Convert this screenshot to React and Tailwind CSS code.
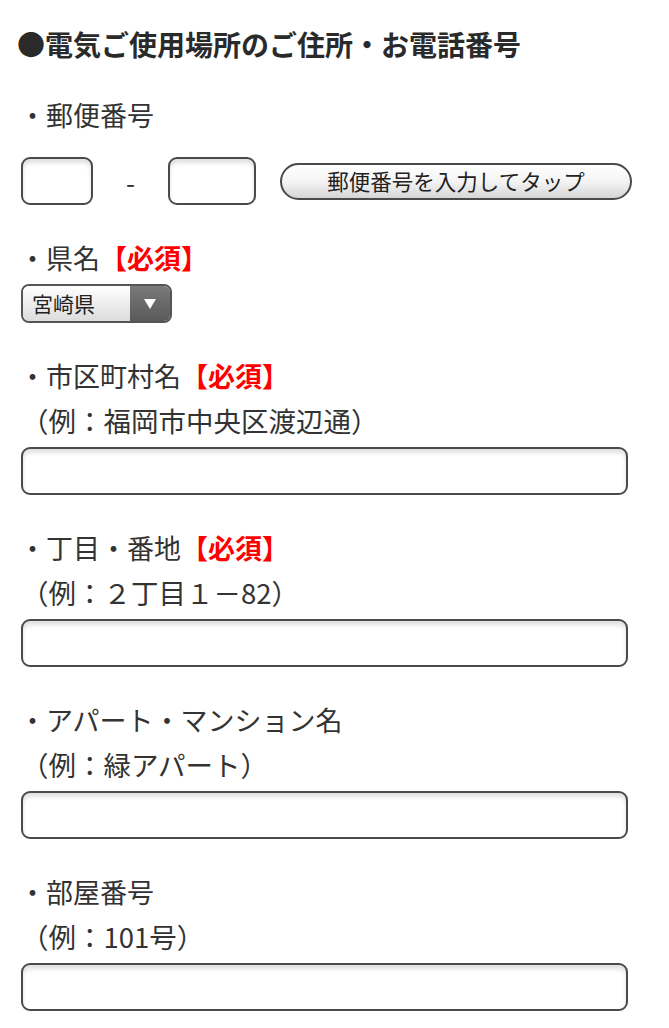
const font = { fontFamily: '"Noto Sans CJK JP", "Noto Sans", sans-serif' };

function Label({ text, required }) {
  return (
    <div className="-ml-[2px] h-[44px] leading-[44px] text-[27px] text-[#333] whitespace-nowrap">
      ・{text}
      {required && <span className="font-bold text-[#ff0000]">【必須】</span>}
    </div>
  );
}

function Example({ text }) {
  return <div className="h-[44px] leading-[44px] text-[27.5px] text-[#333] whitespace-nowrap">{text}</div>;
}

function TextBox({ className = '' }) {
  return (
    <input
      type="text"
      className={`block h-[48px] rounded-[9px] border-2 border-[#4a4a4a] bg-white shadow-[inset_0_4px_4px_rgba(0,0,0,0.12)] outline-none ${className}`}
    />
  );
}

function Field({ label, example, required, last }) {
  return (
    <div className={last ? '' : 'pb-[31px]'}>
      <Label text={label} required={required} />
      <Example text={example} />
      <TextBox className="mt-[5px] w-[607px]" />
    </div>
  );
}

export default function App() {
  return (
    <div className="w-[669px] min-h-[1028px] bg-white pl-[21px] pt-[22px]" style={font}>
      <h2 className="h-[44px] leading-[44px] text-[28px] font-bold text-[#2a2a2a] whitespace-nowrap -ml-[4px]">
        ●電気ご使用場所のご住所・お電話番号
      </h2>

      <div className="pt-[27px] pb-[31px]">
        <Label text="郵便番号" />
        <div className="mt-[20px] flex items-center">
          <TextBox className="w-[72px]" />
          <span className="w-[75px] text-center text-[26px] text-[#333]">-</span>
          <TextBox className="w-[88px]" />
          <button className="ml-[24px] h-[37px] w-[352px] rounded-full border-2 border-[#4a4a4a] bg-gradient-to-b from-white via-[#f4f4f4] to-[#d6d6d6] text-[21.5px] leading-none text-[#222]">
            郵便番号を入力してタップ
          </button>
        </div>
      </div>

      <div className="pb-[31px]">
        <Label text="県名" required />
        <div className="mt-[4px] flex h-[39px] w-[151px] overflow-hidden rounded-[8px] border-2 border-[#555]">
          <div className="flex flex-1 items-center bg-gradient-to-b from-white to-[#dcdcdc] pl-[9px] text-[21px] text-[#222]">
            宮崎県
          </div>
          <div className="flex w-[40px] items-center justify-center bg-gradient-to-b from-[#7a7a7a] to-[#5a5a5a]">
            <svg width="14" height="12" viewBox="0 0 14 12">
              <path d="M1 1 H13 L7 11 Z" fill="#fff" />
            </svg>
          </div>
        </div>
      </div>

      <Field label="市区町村名" required example="（例：福岡市中央区渡辺通）" />
      <Field label="丁目・番地" required example="（例：２丁目１－82）" />
      <Field label="アパート・マンション名" example="（例：緑アパート）" />
      <Field label="部屋番号" example="（例：101号）" last />
    </div>
  );
}
